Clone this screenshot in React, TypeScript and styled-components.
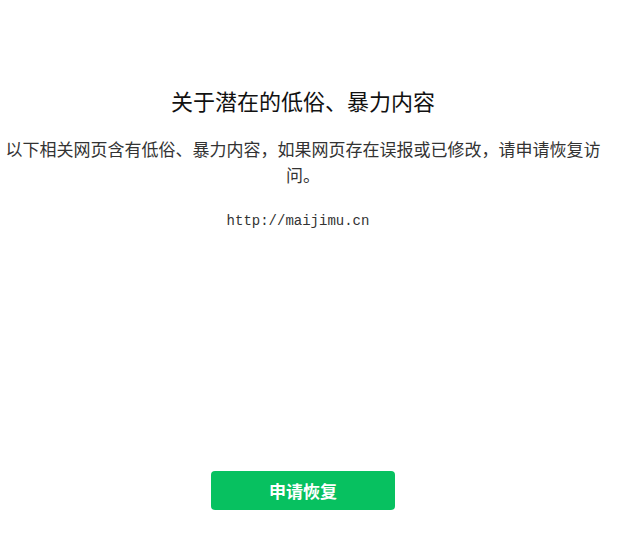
import React from 'react';
import styled, { createGlobalStyle } from 'styled-components';

const GlobalStyle = createGlobalStyle`
  html, body {
    margin: 0;
    padding: 0;
    background: #fff;
  }

  body {
    font-family: "Liberation Sans", "Noto Sans CJK SC", sans-serif;
  }
`;

const Page = styled.div`
  box-sizing: border-box;
  width: calc(100% - 17px);
  min-height: 100vh;
  display: flex;
  flex-direction: column;
  align-items: center;
  text-align: center;
  padding: 88px 0 42px;
`;

const Title = styled.h2`
  margin: 0;
  font-size: 22px;
  line-height: 30px;
  font-weight: 400;
  color: #111;
`;

const Desc = styled.p`
  margin: 20px 0 0;
  font-size: 17px;
  line-height: 26px;
  color: #333;
`;

const Url = styled.p`
  margin: 21px 0 0;
  padding-right: 10px;
  font-family: "Liberation Mono", "Noto Sans CJK SC", monospace;
  font-size: 14px;
  line-height: 20px;
  color: #333;
`;

const ButtonArea = styled.div`
  margin-top: auto;
`;

const RecoverButton = styled.button`
  width: 184px;
  height: 39px;
  border: 0;
  border-radius: 4px;
  background: #07c160;
  color: #fff;
  font-family: "Noto Sans CJK SC", sans-serif;
  font-size: 17px;
  font-weight: 700;
  cursor: pointer;
`;

export default function App() {
  return (
    <>
      <GlobalStyle />
      <Page>
        <Title>关于潜在的低俗、暴力内容</Title>
        <Desc>以下相关网页含有低俗、暴力内容，如果网页存在误报或已修改，请申请恢复访问。</Desc>
        <Url>http://maijimu.cn</Url>
        <ButtonArea>
          <RecoverButton>申请恢复</RecoverButton>
        </ButtonArea>
      </Page>
    </>
  );
}
